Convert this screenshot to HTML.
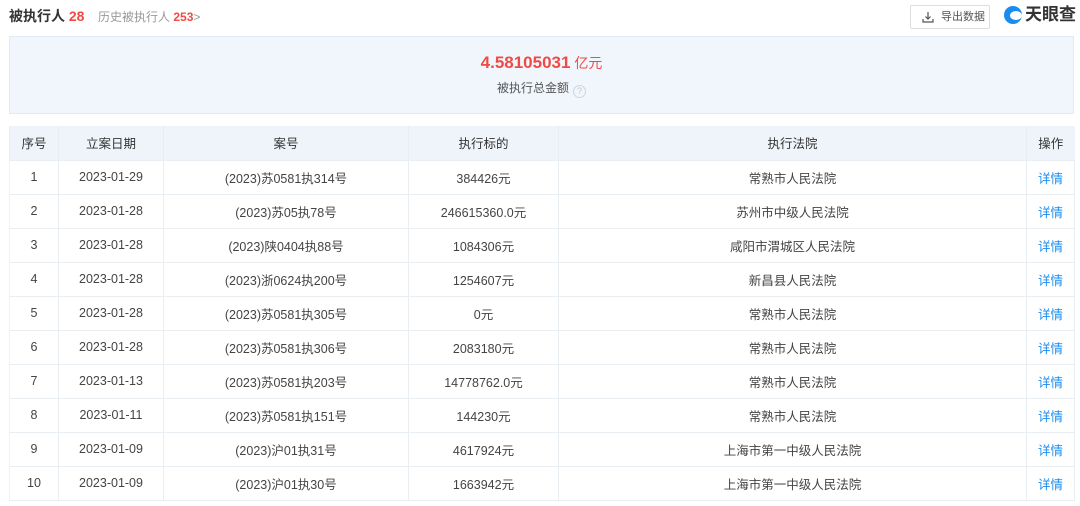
<!DOCTYPE html>
<html><head><meta charset="utf-8"><style>
*{margin:0;padding:0;box-sizing:border-box}
body{width:1080px;height:506px;background:#fff;font-family:"Liberation Sans","Noto Sans CJK SC",sans-serif;color:#333;position:relative;overflow:hidden}
.t{position:absolute;left:9px;top:6px;font-size:14px;font-weight:bold;color:#333}
.t b{color:#f04a46}
.h{position:absolute;left:98px;top:8px;font-size:12px;color:#999}
.h b{color:#f04a46;font-weight:bold}
.btn{position:absolute;left:910px;top:5px;width:80px;height:24px;border:1px solid #ddd;border-radius:2px;font-size:11px;color:#555;line-height:22px;padding-left:30px}
.btn svg{position:absolute;left:11px;top:5px}
.logo{position:absolute;left:1004px;top:4px;font-size:17px;font-weight:bold;color:#333;padding-left:21px;line-height:22px}
.logo i{position:absolute;left:0;top:2px;width:18px;height:18px;border-radius:50%;background:#1a8cf0}
.logo i:after{content:"";position:absolute;left:6px;top:5px;width:12px;height:9px;border-radius:50%;background:#fff}
.sum{position:absolute;left:9px;top:36px;width:1065px;height:78px;background:#f0f6fb;border:1px solid #e3ebf2;text-align:center}
.sum .a{margin-top:16px;font-size:17px;font-weight:bold;color:#f04a46}
.sum .a span{font-weight:normal;font-size:14px}
.sum .l{margin-top:6px;font-size:12px;color:#555}
.q{display:inline-block;width:13px;height:13px;border:1px solid #c7d7e6;border-radius:50%;font-size:9px;line-height:11px;color:#b9cbdc;vertical-align:-2px;margin-left:4px}
table{position:absolute;left:9px;top:126px;width:1065px;border-collapse:collapse;font-size:12.5px;color:#444;table-layout:fixed}
th{background:#eef4fa;height:34px;font-weight:normal;color:#333;border-left:1px solid #e6edf4;text-align:center}
td{height:34px;text-align:center;border:1px solid #e9eef3}
td.o{color:#1a8cf0}
tr td:first-child{border-left:1px solid #eef2f5}
</style></head><body>
<div class="t">被执行人 <b>28</b></div>
<div class="h">历史被执行人 <b>253</b>&gt;</div>
<div class="btn"><svg width="12" height="12" viewBox="0 0 12 12" fill="none" stroke="#555" stroke-width="1.2"><path d="M6 1v7M3.5 5.5L6 8l2.5-2.5M1 8v3h10V8"/></svg>导出数据</div>
<div class="logo"><i></i>天眼查</div>
<div class="sum"><div class="a">4.58105031<span> 亿元</span></div><div class="l">被执行总金额<span class="q">?</span></div></div>
<table>
<colgroup><col style="width:49px"><col style="width:105px"><col style="width:245px"><col style="width:150px"><col style="width:468px"><col style="width:48px"></colgroup>
<tr><th>序号</th><th>立案日期</th><th>案号</th><th>执行标的</th><th>执行法院</th><th>操作</th></tr>
<tr><td>1</td><td>2023-01-29</td><td>(2023)苏0581执314号</td><td>384426元</td><td>常熟市人民法院</td><td class="o">详情</td></tr>
<tr><td>2</td><td>2023-01-28</td><td>(2023)苏05执78号</td><td>246615360.0元</td><td>苏州市中级人民法院</td><td class="o">详情</td></tr>
<tr><td>3</td><td>2023-01-28</td><td>(2023)陕0404执88号</td><td>1084306元</td><td>咸阳市渭城区人民法院</td><td class="o">详情</td></tr>
<tr><td>4</td><td>2023-01-28</td><td>(2023)浙0624执200号</td><td>1254607元</td><td>新昌县人民法院</td><td class="o">详情</td></tr>
<tr><td>5</td><td>2023-01-28</td><td>(2023)苏0581执305号</td><td>0元</td><td>常熟市人民法院</td><td class="o">详情</td></tr>
<tr><td>6</td><td>2023-01-28</td><td>(2023)苏0581执306号</td><td>2083180元</td><td>常熟市人民法院</td><td class="o">详情</td></tr>
<tr><td>7</td><td>2023-01-13</td><td>(2023)苏0581执203号</td><td>14778762.0元</td><td>常熟市人民法院</td><td class="o">详情</td></tr>
<tr><td>8</td><td>2023-01-11</td><td>(2023)苏0581执151号</td><td>144230元</td><td>常熟市人民法院</td><td class="o">详情</td></tr>
<tr><td>9</td><td>2023-01-09</td><td>(2023)沪01执31号</td><td>4617924元</td><td>上海市第一中级人民法院</td><td class="o">详情</td></tr>
<tr><td>10</td><td>2023-01-09</td><td>(2023)沪01执30号</td><td>1663942元</td><td>上海市第一中级人民法院</td><td class="o">详情</td></tr>
</table>
</body></html>
